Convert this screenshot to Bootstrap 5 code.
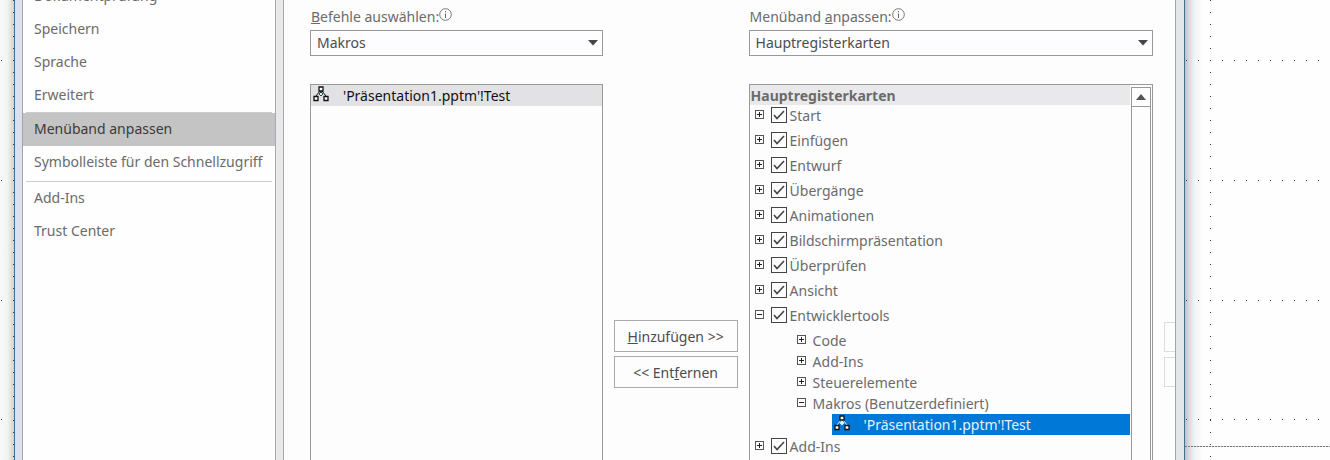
<!DOCTYPE html>
<html lang="de">
<head>
<meta charset="utf-8">
<meta name="viewport" content="width=device-width, initial-scale=1">
<title>Menüband anpassen</title>
<link href="https://cdn.jsdelivr.net/npm/bootstrap@5.3.0/dist/css/bootstrap.min.css" rel="stylesheet">
<style>
  body { font: 14px/20px "Noto Sans", "Open Sans", sans-serif; color: #6b6b6b; background: #fdfefd; }
  .desk { --dot: repeating-linear-gradient(90deg, #333 0 1px, transparent 1px 12px); --dotv: repeating-linear-gradient(#333 0 1px, transparent 1px 12px); }
  /* grid lines of the document behind the dialog */
  .desk-left { width: 14px; background:
    var(--dotv) right 0 / 1px 100% no-repeat,
    var(--dot) 1px 60px / 12px 1px no-repeat, var(--dot) 1px 180px / 12px 1px no-repeat,
    var(--dot) 1px 300px / 12px 1px no-repeat, var(--dot) 1px 419px / 12px 1px no-repeat,
    linear-gradient(90deg, #f7f9f6, #f3f5f2 50%, #d2d4d0); }
  .desk-right { width: 145px; background:
    var(--dotv) 25px 0 / 1px 100% no-repeat,
    var(--dot) 1px 60px / 100% 1px no-repeat, var(--dot) 1px 180px / 100% 1px no-repeat,
    var(--dot) 1px 300px / 100% 1px no-repeat, var(--dot) 1px 419px / 100% 1px no-repeat,
    repeating-linear-gradient(90deg, #777 0 2px, #ddd 2px 3px) 0 446px / 100% 1px no-repeat,
    linear-gradient(90deg, #bfc0ca, #d9d9e0 4px, #f0f1f2 9px, #fdfefd 18px); }
  .dialog { background: #fdfdfe; border: solid #3f6f92; border-width: 0 1px; }
  .edge { width: 8px; background: #d9e1ef; border-right: 1px solid #a9a3a8; }
  .edge-end { width: 9px; background: #e2e7ea; border-right: 0; border-left: 1px solid #a9a3a8; }
  .side { width: 252px; margin-top: -20px; background: #fdfefd; }
  .side a { display: block; height: 33px; padding: 6px 0 0 11px; color: #6b6b6b; text-decoration: none; white-space: nowrap; }
  .side a.active { background: #c4c4c4; color: #3a3a3a; }
  .side hr { margin: 0 3px; border-color: #ccc; opacity: 1; }
  .side .active ~ hr { margin-top: 2px; }
  .splitter { width: 9px; background: #e9e9eb; border: solid #aaa; border-width: 0 1px; }
  .pane { padding: 0 0 0 26px; gap: 11px; }
  .source { flex: 293 1 0; }
  .target { flex: 405 1 0; }
  .caption { height: 30px; padding: 7px 0 0 1px; }
  .caption svg { margin-bottom: 8px; }
  .combo { height: 26px; padding: 1px 24px 1px 6px; border: 1px solid #999; border-radius: 0; color: #4c4c4c; font-size: 14px; line-height: 22px;
    background: #fdfdff url("data:image/svg+xml,%3Csvg xmlns='http://www.w3.org/2000/svg' width='10' height='6'%3E%3Cpath d='M0 0h10L5 5.500z' fill='%23444'/%3E%3C/svg%3E") no-repeat right 4px center / 10px 6px; }
  .listing { margin-top: 28px; border: 1px solid #999; border-bottom: 0; background: #fdfdfe; }
  .macro { height: 21px; padding-left: 2px; gap: 14px; }
  .macro svg { margin-bottom: 3px; }
  .macro span { padding-top: 1px; }
  .chosen { background: #e2e2e4; color: #111; }
  .moves { width: 124px; padding-top: 320px; gap: 4px; }
  .moves .btn { height: 32px; padding: 1px 0 0; border: 1px solid #aaa; border-radius: 0; background: #fdfdfe; color: #4c4c4c; font-size: 14px; line-height: 20px; }
  .order { width: 11px; padding-top: 322px; gap: 5px; }
  .order .btn { height: 30px; padding: 0; border: 1px solid #ddd; border-right: 0; border-radius: 0; }
  .tree-title { height: 20px; margin: 0 0 -2px; padding: 1px 0 0 1px; background: #e9e9eb; font-size: 14px; line-height: 20px; font-weight: 700; }
  .tree ul { list-style: none; margin: 0; padding: 0; }
  .tree-row { height: 25px; padding-left: 5px; }
  .tree .branch { margin: 2px 0 -1px; }
  .branch .tree-row { height: 21px; padding-left: 47px; }
  .branch .twist { margin: 0 7px 3px 0; }
  .branch .macro { margin-left: 82px; background: #0078d7; color: #e6f2ff; }
  .twist { width: 9px; height: 9px; margin: 0 7px 2px 0; padding: 0; border: 1px solid #555; background: linear-gradient(#222 0 0) center / 5px 1px no-repeat; }
  .twist.closed { background: linear-gradient(#222 0 0) center / 5px 1px no-repeat, linear-gradient(#222 0 0) center / 1px 5px no-repeat; }
  .tick { appearance: none; width: 16px; height: 16px; margin: 0 3px 2px 0; border: 1px solid #444;
    background: url("data:image/svg+xml,%3Csvg xmlns='http://www.w3.org/2000/svg' width='14' height='14'%3E%3Cpath d='M2 7l3 3.500L12 3' fill='none' stroke='%23444' stroke-width='1.600'/%3E%3C/svg%3E") center no-repeat; }
  .rail { width: 20px; margin: 2px 1px 0 1px; border: solid #999; border-width: 0 1px; }
  .rail button { height: 20px; padding: 0; border: solid #999; border-width: 1px 0; background: #fdfdfe; }
</style>
</head>
<body class="overflow-hidden">
<svg class="d-none">
  <symbol id="macro" viewBox="0 0 16 16">
    <path d="M7 5L3 10M9 5l4 5M8 5v3" stroke="currentColor" fill="none"/>
    <path d="M8 6l2 2-2 2-2-2z" fill="#cfe" stroke="currentColor" stroke-width=".8"/>
    <path d="M6 1h4v4H6zM1 10.500h4v4H1zM11 10.500h4v4h-4z" fill="#fff" stroke="#111" stroke-width="1.300"/>
  </symbol>
  <symbol id="info" viewBox="0 0 13 13">
    <circle cx="6.500" cy="6.500" r="5.800" fill="none" stroke="#777"/>
    <path d="M6.500 5.500v4.500M6.500 3v1.300" stroke="#666"/>
  </symbol>
</svg>
<div class="desk d-flex vh-100 overflow-hidden">
  <div class="desk-left flex-shrink-0"></div>
  <main class="dialog d-flex flex-grow-1">
    <div class="edge flex-shrink-0"></div>
    <nav class="side flex-shrink-0">
      <a href="#">Dokumentprüfung</a>
      <a href="#">Speichern</a>
      <a href="#">Sprache</a>
      <a href="#">Erweitert</a>
      <hr>
      <a href="#" class="active" aria-current="page">Menüband anpassen</a>
      <a href="#">Symbolleiste für den Schnellzugriff</a>
      <hr>
      <a href="#">Add-Ins</a>
      <a href="#">Trust Center</a>
    </nav>
    <div class="splitter flex-shrink-0"></div>
    <div class="pane d-flex flex-grow-1">
      <section class="source d-flex flex-column">
        <label class="caption" for="commands"><u>B</u>efehle auswählen:<svg width="13" height="13"><use href="#info"/></svg></label>
        <select class="combo form-select" id="commands"><option>Makros</option></select>
        <div class="listing flex-grow-1">
          <div class="macro chosen d-flex align-items-center"><svg width="16" height="16"><use href="#macro"/></svg><span>'Präsentation1.pptm'!Test</span></div>
        </div>
      </section>
      <div class="moves d-flex flex-column flex-shrink-0">
        <button type="button" class="btn"><u>H</u>inzufügen &gt;&gt;</button>
        <button type="button" class="btn">&lt;&lt; Ent<u>f</u>ernen</button>
      </div>
      <section class="target d-flex flex-column">
        <label class="caption" for="tabs">Menüband <u>a</u>npassen:<svg width="13" height="13"><use href="#info"/></svg></label>
        <select class="combo form-select" id="tabs"><option>Hauptregisterkarten</option></select>
        <div class="listing d-flex flex-grow-1">
          <div class="tree flex-grow-1">
            <h2 class="tree-title">Hauptregisterkarten</h2>
            <ul>
              <li class="tree-row d-flex align-items-center"><button class="twist closed" aria-label="Öffnen"></button><input class="tick" type="checkbox" id="t1" checked><label for="t1">Start</label></li>
              <li class="tree-row d-flex align-items-center"><button class="twist closed" aria-label="Öffnen"></button><input class="tick" type="checkbox" id="t2" checked><label for="t2">Einfügen</label></li>
              <li class="tree-row d-flex align-items-center"><button class="twist closed" aria-label="Öffnen"></button><input class="tick" type="checkbox" id="t3" checked><label for="t3">Entwurf</label></li>
              <li class="tree-row d-flex align-items-center"><button class="twist closed" aria-label="Öffnen"></button><input class="tick" type="checkbox" id="t4" checked><label for="t4">Übergänge</label></li>
              <li class="tree-row d-flex align-items-center"><button class="twist closed" aria-label="Öffnen"></button><input class="tick" type="checkbox" id="t5" checked><label for="t5">Animationen</label></li>
              <li class="tree-row d-flex align-items-center"><button class="twist closed" aria-label="Öffnen"></button><input class="tick" type="checkbox" id="t6" checked><label for="t6">Bildschirmpräsentation</label></li>
              <li class="tree-row d-flex align-items-center"><button class="twist closed" aria-label="Öffnen"></button><input class="tick" type="checkbox" id="t7" checked><label for="t7">Überprüfen</label></li>
              <li class="tree-row d-flex align-items-center"><button class="twist closed" aria-label="Öffnen"></button><input class="tick" type="checkbox" id="t8" checked><label for="t8">Ansicht</label></li>
              <li>
                <div class="tree-row d-flex align-items-center"><button class="twist" aria-label="Schließen"></button><input class="tick" type="checkbox" id="t9" checked><label for="t9">Entwicklertools</label></div>
                <ul class="branch">
                  <li class="tree-row d-flex align-items-center"><button class="twist closed" aria-label="Öffnen"></button>Code</li>
                  <li class="tree-row d-flex align-items-center"><button class="twist closed" aria-label="Öffnen"></button>Add-Ins</li>
                  <li class="tree-row d-flex align-items-center"><button class="twist closed" aria-label="Öffnen"></button>Steuerelemente</li>
                  <li class="tree-row d-flex align-items-center"><button class="twist" aria-label="Schließen"></button>Makros (Benutzerdefiniert)</li>
                  <li class="macro d-flex align-items-center"><svg width="16" height="16"><use href="#macro"/></svg><span>'Präsentation1.pptm'!Test</span></li>
                </ul>
              </li>
              <li class="tree-row d-flex align-items-center"><button class="twist closed" aria-label="Öffnen"></button><input class="tick" type="checkbox" id="t10" checked><label for="t10">Add-Ins</label></li>
            </ul>
          </div>
          <div class="rail d-flex flex-column flex-shrink-0">
            <button type="button" class="d-flex align-items-center justify-content-center" aria-label="Nach oben"><svg width="10" height="6"><path d="M0 6h10L5 0z" fill="#555"/></svg></button>
          </div>
        </div>
      </section>
      <div class="order d-flex flex-column flex-shrink-0">
        <button type="button" class="btn" aria-label="Nach oben verschieben"></button>
        <button type="button" class="btn" aria-label="Nach unten verschieben"></button>
      </div>
    </div>
    <div class="edge edge-end flex-shrink-0"></div>
  </main>
  <div class="desk-right flex-shrink-0"></div>
</div>
<script src="https://cdn.jsdelivr.net/npm/bootstrap@5.3.0/dist/js/bootstrap.bundle.min.js"></script>
</body>
</html>
